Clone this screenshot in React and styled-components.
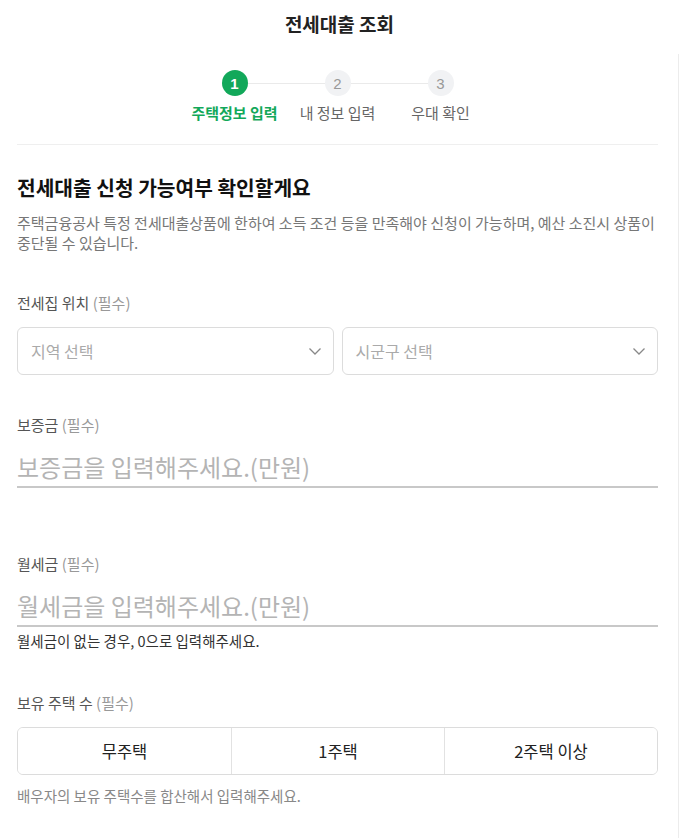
import React from "react";
import styled, { createGlobalStyle } from "styled-components";

const GlobalStyle = createGlobalStyle`
  html, body {
    margin: 0;
    padding: 0;
    background: #fff;
  }
  body {
    font-family: "Noto Sans CJK KR", "Noto Sans", sans-serif;
    color: #222;
  }
  * {
    box-sizing: border-box;
  }
`;

const Page = styled.div`
  width: 679px;
  height: 838px;
  overflow: hidden;
`;

const Header = styled.div`
  height: 54px;
  display: flex;
  align-items: flex-start;
  justify-content: center;
  padding-top: 10px;
`;

const Title = styled.h1`
  margin: 0;
  font-size: 19px;
  line-height: 28px;
  font-weight: 700;
  color: #222;
`;

const Main = styled.div`
  border-right: 1px solid #ececec;
  padding: 16px 20px 0 17px;
  min-height: 784px;
`;

const Stepper = styled.div`
  display: flex;
  flex-direction: column;
  align-items: center;
  padding-bottom: 21px;
  border-bottom: 1px solid #efefef;
`;

const StepTrack = styled.div`
  display: flex;
  align-items: center;
`;

const Circle = styled.div`
  width: 26px;
  height: 26px;
  border-radius: 50%;
  display: flex;
  align-items: center;
  justify-content: center;
  font-size: 15px;
  font-weight: ${(p) => (p.active ? 700 : 400)};
  background: ${(p) => (p.active ? "#12a85a" : "#f1f2f4")};
  color: ${(p) => (p.active ? "#fff" : "#999")};
  font-family: "Liberation Sans", Arial, sans-serif;
`;

const Connector = styled.div`
  width: 77px;
  height: 1px;
  background: #eaeaea;
`;

const StepLabels = styled.div`
  display: grid;
  grid-template-columns: repeat(3, 103px);
  margin-top: 7px;
`;

const StepLabel = styled.div`
  text-align: center;
  font-size: 15px;
  line-height: 20px;
  white-space: nowrap;
  font-weight: ${(p) => (p.active ? 700 : 400)};
  color: ${(p) => (p.active ? "#12a85a" : "#666")};
`;

const Heading = styled.h2`
  margin: 28px 0 0;
  font-size: 20.3px;
  line-height: 28px;
  font-weight: 700;
  color: #111;
`;

const Description = styled.p`
  margin: 12px 0 40px;
  font-size: 15px;
  line-height: 20px;
  color: #777;
`;

const Field = styled.div`
  margin-bottom: 40px;
`;

const Label = styled.div`
  font-size: 15px;
  line-height: 20px;
  color: #555;
  margin-bottom: ${(p) => (p.tight ? "12px" : "14px")};

  span {
    color: #999;
  }
`;

const SelectRow = styled.div`
  display: grid;
  grid-template-columns: 1fr 1fr;
  gap: 8px;
`;

const SelectBox = styled.div`
  height: 48px;
  border: 1px solid #dcdcdc;
  border-radius: 6px;
  display: flex;
  align-items: center;
  justify-content: space-between;
  padding: 0 11px 0 13px;
  font-size: 16px;
  color: #aaa;
`;

const AmountInput = styled.input`
  display: block;
  width: 100%;
  height: 41px;
  border: none;
  border-bottom: 2px solid #c8c8c8;
  padding: 0 0 1px;
  outline: none;
  font-family: inherit;
  font-size: 24px;
  color: #222;
  background: transparent;

  &::placeholder {
    color: #b4b4b4;
  }
`;

const Helper = styled.div`
  min-height: 26px;
  padding-top: ${(p) => (p.loose ? "11px" : "4px")};
  font-size: 14.5px;
  line-height: 20px;
  color: ${(p) => (p.loose ? "#888" : "#333")};
`;

const Segments = styled.div`
  display: grid;
  grid-template-columns: repeat(3, 1fr);
  height: 48px;
  border: 1px solid #dcdcdc;
  border-radius: 6px;
  overflow: hidden;
`;

const Segment = styled.button`
  border: none;
  border-left: ${(p) => (p.first ? "none" : "1px solid #e2e2e2")};
  background: #fff;
  font-family: inherit;
  font-size: 16.5px;
  color: #222;
  cursor: pointer;
`;

const Chevron = () => (
  <svg width="14" height="14" viewBox="0 0 14 14" fill="none">
    <path d="M1.5 4.5 L7 10 L12.5 4.5" stroke="#888" strokeWidth="1.3" />
  </svg>
);

const steps = ["주택정보 입력", "내 정보 입력", "우대 확인"];

export default function App() {
  return (
    <Page>
      <GlobalStyle />
      <Header>
        <Title>전세대출 조회</Title>
      </Header>
      <Main>
        <Stepper>
          <StepTrack>
            <Circle active>1</Circle>
            <Connector />
            <Circle>2</Circle>
            <Connector />
            <Circle>3</Circle>
          </StepTrack>
          <StepLabels>
            {steps.map((s, i) => (
              <StepLabel key={s} active={i === 0}>
                {s}
              </StepLabel>
            ))}
          </StepLabels>
        </Stepper>

        <Heading>전세대출 신청 가능여부 확인할게요</Heading>
        <Description>
          주택금융공사 특정 전세대출상품에 한하여 소득 조건 등을 만족해야 신청이 가능하며, 예산 소진시 상품이
          <br />
          중단될 수 있습니다.
        </Description>

        <Field>
          <Label>
            전세집 위치 <span>(필수)</span>
          </Label>
          <SelectRow>
            <SelectBox>
              지역 선택
              <Chevron />
            </SelectBox>
            <SelectBox>
              시군구 선택
              <Chevron />
            </SelectBox>
          </SelectRow>
        </Field>

        <Field>
          <Label tight>
            보증금 <span>(필수)</span>
          </Label>
          <AmountInput placeholder="보증금을 입력해주세요.(만원)" />
          <Helper />
        </Field>

        <Field>
          <Label tight>
            월세금 <span>(필수)</span>
          </Label>
          <AmountInput placeholder="월세금을 입력해주세요.(만원)" />
          <Helper>월세금이 없는 경우, 0으로 입력해주세요.</Helper>
        </Field>

        <Field>
          <Label>
            보유 주택 수 <span>(필수)</span>
          </Label>
          <Segments>
            <Segment first>무주택</Segment>
            <Segment>1주택</Segment>
            <Segment>2주택 이상</Segment>
          </Segments>
          <Helper loose>배우자의 보유 주택수를 합산해서 입력해주세요.</Helper>
        </Field>
      </Main>
    </Page>
  );
}
